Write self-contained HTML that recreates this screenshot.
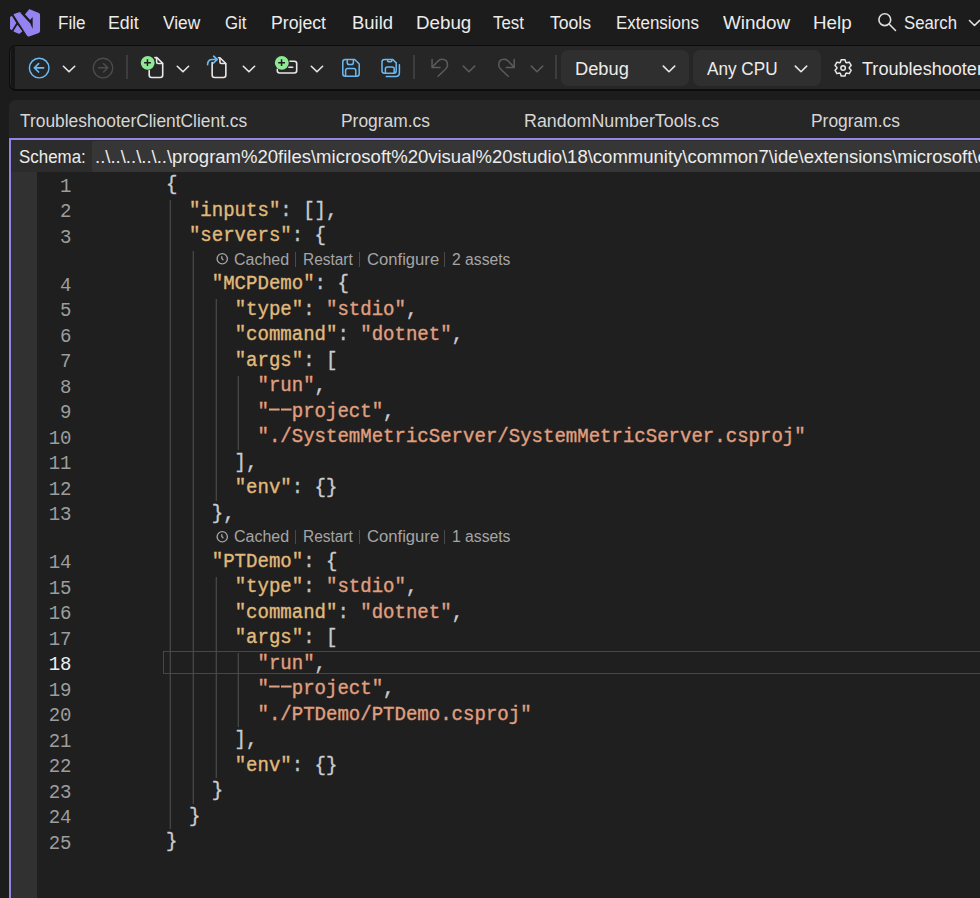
<!DOCTYPE html>
<html><head><meta charset="utf-8"><style>
*{margin:0;padding:0;box-sizing:border-box}
html,body{width:980px;height:898px;overflow:hidden;background:#1c1c1c;font-family:"Liberation Sans",sans-serif;color:#e6e6e6}
.abs{position:absolute}
.mi{position:absolute;top:11.5px;font-size:18.3px;transform:scaleX(0.951);transform-origin:0 0;line-height:22px;color:#ececec;white-space:nowrap}
#tb{position:absolute;left:9.2px;top:45.2px;width:990px;height:45.6px;background:#262626;border:1.8px solid #0c0c0c;border-bottom-width:2.7px;border-radius:7px}
#grip{position:absolute;left:11px;top:47px;width:4.2px;height:41px;background:#151515;border-radius:5px 0 0 5px}
.sepv{position:absolute;width:1.5px;top:55px;height:24px;background:#3d3d3d}
.dd{position:absolute;top:50px;height:35.5px;background:#2f2f2f;border-radius:7px}
.ddt{position:absolute;top:57.8px;font-size:18.3px;transform:scaleX(0.951);transform-origin:0 0;line-height:22px;color:#ececec;white-space:nowrap}
#tabs{position:absolute;left:9px;top:100px;width:990px;height:40px;background:#262626;border-radius:6.5px 0 0 0}
.tab{position:absolute;top:109.5px;font-size:18.3px;transform:scaleX(0.951);transform-origin:0 0;line-height:22px;color:#d6d6d6;white-space:nowrap}
#frame{position:absolute;left:9px;top:138px;width:990px;height:800px;border-left:2px solid #9484e6;border-top:2px solid #9484e6}
#schema{position:absolute;left:11px;top:140px;width:980px;height:32px;background:#2c2c2c}
#combo{position:absolute;left:92px;top:141px;width:900px;height:30.5px;background:#363636;border-radius:2px 0 0 2px}
.st{position:absolute;top:145.5px;font-size:18.3px;transform:scaleX(0.951);transform-origin:0 0;line-height:22px;color:#ececec;white-space:nowrap}
#gut{position:absolute;left:11px;top:172px;width:26px;height:726px;background:#313131}
#ed{position:absolute;left:37px;top:172px;width:943px;height:726px;background:#1f1f1f}
.ln{position:absolute;left:30px;width:41.5px;text-align:right;font-family:"Liberation Mono",monospace;font-size:19.05px;line-height:25.5px;color:#9d9d9d;padding-top:0.2px;transform:scaleY(1.1);transform-origin:0 18px}
.ln.cur{color:#efefef}
.cl{position:absolute;left:166.1px;font-family:"Liberation Mono",monospace;font-size:19.05px;line-height:25.5px;color:#c9ccd0;white-space:pre;margin-top:-1px;-webkit-text-stroke:0.35px currentColor;transform:scaleY(1.06);transform-origin:0 17px}
.cl b{font-weight:normal}
.dash{color:transparent;background:linear-gradient(#e0a080,#e0a080) 0.5px 8.2px/10.6px 1.9px no-repeat,linear-gradient(#e0a080,#e0a080) 12.1px 8.2px/10.6px 1.9px no-repeat}
.cl i{font-style:normal;color:#bcc3ca}
.g{position:absolute;width:1px;background:#454545;box-shadow:-1px 0 0 #2c2c2c}
#cur{position:absolute;left:163px;top:651px;width:830px;height:23px;border:1px solid #474747}
.lens{position:absolute;left:0;width:980px;height:22.5px}
.lens span{position:absolute;top:-2.5px;font-size:16px;line-height:22px;color:#a5a5a5;white-space:nowrap}
.lens span.sep{top:1px;width:1px;height:14.5px;background:#4a4a4a}
.clock{position:absolute;left:215px;top:1px}
</style></head><body>
<!-- logo -->
<svg class="abs" style="left:0;top:0" width="45" height="40" viewBox="0 0 45 40">
<g fill="#9483f0" stroke="#9483f0" stroke-width="1.3" stroke-linejoin="round">
<path d="M10.7 17.2 L11.6 16.7 L15.6 23 L11.6 29.3 L10.7 28.8 Z"/>
<path d="M14.2 31.2 L17.5 25.8 L21.6 31.3 L19.1 33.2 Z"/>
<path d="M14.3 14.6 L19.1 12.9 L21.5 13.4 L24.9 15.4 L29.5 9.8 L38.6 13.5 L39.4 14.6 V31.2 L38.6 32.4 L28.8 36 L27.6 35.4 Z"/>
</g>
<path d="M21.6 12.4 L30.4 22" stroke="#1c1c1c" stroke-width="2.3"/>
<path d="M29.2 21.1 L32.7 16.9 L32.7 29 Z" fill="#1c1c1c"/>
</svg>
<span class="mi" style="left:57.6px;transform:scaleX(0.9367)">File</span><span class="mi" style="left:107.6px;transform:scaleX(0.9700)">Edit</span><span class="mi" style="left:163.3px;transform:scaleX(0.9462)">View</span><span class="mi" style="left:225.3px;transform:scaleX(0.9177)">Git</span><span class="mi" style="left:271.3px;transform:scaleX(0.9672)">Project</span><span class="mi" style="left:351.9px;transform:scaleX(1.0081)">Build</span><span class="mi" style="left:415.6px;transform:scaleX(1.0252)">Debug</span><span class="mi" style="left:493.3px;transform:scaleX(0.9187)">Test</span><span class="mi" style="left:549.6px;transform:scaleX(0.9624)">Tools</span><span class="mi" style="left:615.6px;transform:scaleX(0.9272)">Extensions</span><span class="mi" style="left:723.3px;transform:scaleX(1.0309)">Window</span><span class="mi" style="left:813.3px;transform:scaleX(1.0271)">Help</span><span class="mi" style="left:904.3px;transform:scaleX(0.9149)">Search</span>

<!-- toolbar -->
<div id="tb"></div><div id="grip"></div>
<div class="sepv" style="left:126px"></div>
<div class="sepv" style="left:413px"></div>
<div class="sepv" style="left:555px"></div>
<div class="dd" style="left:561px;width:128px"></div>
<span class="ddt" style="left:575px;transform:scaleX(0.999)">Debug</span>
<div class="dd" style="left:693px;width:128px"></div>
<span class="ddt" style="left:706.5px;transform:scaleX(0.9386)">Any CPU</span>
<svg class="abs" style="left:0;top:0" width="980" height="100" viewBox="0 0 980 100" fill="none" stroke-linecap="round" stroke-linejoin="round">
<!-- back -->
<circle cx="39.2" cy="68.05" r="9.8" stroke="#6cb9f2" stroke-width="1.45"/>
<path d="M34.4 67.8H43.6M38.6 63.7L34.4 67.8L38.6 72" stroke="#6cb9f2" stroke-width="1.7"/>
<path d="M63.4 66.3L69.05 71.8L74.7 66.3" stroke="#e8e8e8" stroke-width="1.6"/>
<!-- forward (disabled) -->
<circle cx="103" cy="68.05" r="9.8" stroke="#4c4c4c" stroke-width="1.4"/>
<path d="M98.6 67.8H107.8M103.6 63.7L107.8 67.8L103.6 72" stroke="#4c4c4c" stroke-width="1.6"/>
<!-- new project -->
<path d="M154.9 57.6H156.9L162.7 63.4V75.1Q162.7 77.5 160.3 77.5H151.6Q149.2 77.5 149.2 75.1V70.6" stroke="#e8e8e8" stroke-width="1.6"/>
<path d="M156.6 58.6V62Q156.6 63.45 158 63.45H162.4" stroke="#e8e8e8" stroke-width="1.6"/>
<circle cx="147.7" cy="62.85" r="6.95" fill="#8fe894" stroke="none"/>
<path d="M147.45 59.3V66.1M144.1 62.65H150.9" stroke="#1e1e1e" stroke-width="1.5" stroke-linecap="butt"/>
<path d="M177.3 66.3L182.95 71.8L188.6 66.3" stroke="#e8e8e8" stroke-width="1.6"/>
<!-- open -->
<path d="M218.6 57.7H219.9L225.85 63.5V75.1Q225.85 77.5 223.45 77.5H214.55Q212.15 77.5 212.15 75.1V62.6" stroke="#e8e8e8" stroke-width="1.6"/>
<path d="M219.95 58.6V62Q219.95 63.45 221.4 63.45H225.5" stroke="#e8e8e8" stroke-width="1.6"/>
<path d="M207.6 64.6Q207.6 59.5 212.5 59.5H217.2M213.6 56.2L217.2 59.5L213.6 62.9" stroke="#6cb9f2" stroke-width="1.7"/>
<path d="M243.3 66.3L248.95 71.8L254.6 66.3" stroke="#e8e8e8" stroke-width="1.6"/>
<!-- add item -->
<path d="M290 61.2H294.3Q296.7 61.2 296.7 63.6V70.6Q296.7 73 294.3 73H279.7Q277.3 73 277.3 70.6V69.4" stroke="#e8e8e8" stroke-width="1.6"/>
<path d="M288.9 67.3H292.7" stroke="#e8e8e8" stroke-width="1.6"/>
<circle cx="281.8" cy="62.85" r="6.95" fill="#8fe894" stroke="none"/>
<path d="M281.55 59.3V66.1M278.2 62.65H285" stroke="#1e1e1e" stroke-width="1.5" stroke-linecap="butt"/>
<path d="M311.3 66.3L316.95 71.8L322.6 66.3" stroke="#e8e8e8" stroke-width="1.6"/>
<!-- save -->
<path d="M345.3 59.5H354.7L359.2 64V73.8Q359.2 76.3 356.7 76.3H345.3Q342.8 76.3 342.8 73.8V62Q342.8 59.5 345.3 59.5Z" stroke="#6cb9f2" stroke-width="1.5"/>
<path d="M347.2 59.8V62.4Q347.2 64.5 349.3 64.5H351.3Q353.4 64.5 353.4 62.4V59.8" stroke="#6cb9f2" stroke-width="1.5"/>
<path d="M345.6 76V70.6Q345.6 68.4 347.8 68.4H353.6Q355.8 68.4 355.8 70.6V76" stroke="#6cb9f2" stroke-width="1.5"/>
<!-- save all -->
<path d="M384.5 59.5H392.8L396.2 62.9V70.8Q396.2 73.3 393.7 73.3H384.5Q382 73.3 382 70.8V62Q382 59.5 384.5 59.5Z" stroke="#6cb9f2" stroke-width="1.5"/>
<path d="M387.5 59.8V60.6Q387.5 61.8 388.7 61.8H390.7Q391.9 61.8 391.9 60.6V59.8" stroke="#6cb9f2" stroke-width="1.5"/>
<path d="M385.4 73V69Q385.4 67 387.4 67H392.2Q394.2 67 394.2 69V73" stroke="#6cb9f2" stroke-width="1.5"/>
<path d="M399.4 64.8V72.8Q399.4 76.6 395.6 76.6H386.3" stroke="#6cb9f2" stroke-width="1.5"/>
<!-- undo -->
<path d="M432.06 59.4V67.4H440" stroke="#5c5c5c" stroke-width="1.5"/>
<path d="M432.6 66.8L437.6 61.4Q439.6 59.3 442 59.3Q447.5 59.3 447.5 65Q447.5 67.2 445.9 68.7L438.1 76.2" stroke="#5c5c5c" stroke-width="1.5"/>
<path d="M463.3 66.1L469 71.7L474.7 66.1" stroke="#5c5c5c" stroke-width="1.5"/>
<!-- redo -->
<path d="M514.19 59.4V67.4H506.25" stroke="#5c5c5c" stroke-width="1.5"/>
<path d="M513.65 66.8L508.65 61.4Q506.65 59.3 504.25 59.3Q498.75 59.3 498.75 65Q498.75 67.2 500.35 68.7L508.15 76.2" stroke="#5c5c5c" stroke-width="1.5"/>
<path d="M531.3 66.1L537 71.7L542.7 66.1" stroke="#5c5c5c" stroke-width="1.5"/>
<!-- dropdown chevrons -->
<path d="M663.3 66.1L669 71.7L674.7 66.1" stroke="#e8e8e8" stroke-width="1.6"/>
<path d="M795.3 66.1L801 71.7L806.7 66.1" stroke="#e8e8e8" stroke-width="1.6"/>
<!-- gear -->
<path d="M840.38 62.33 L841.21 59.72 L844.99 59.72 L845.82 62.33 L846.57 62.76 L849.24 62.17 L851.13 65.44 L849.28 67.47 L849.28 68.33 L851.13 70.36 L849.24 73.63 L846.57 73.04 L845.82 73.47 L844.99 76.08 L841.21 76.08 L840.38 73.47 L839.63 73.04 L836.96 73.63 L835.07 70.36 L836.92 68.33 L836.92 67.47 L835.07 65.44 L836.96 62.17 L839.63 62.76 Z" stroke="#e8e8e8" stroke-width="1.5"/>
<circle cx="843.1" cy="67.9" r="2.25" stroke="#e8e8e8" stroke-width="1.5"/>
<!-- search -->
<circle cx="884.8" cy="19.7" r="5.9" stroke="#dedede" stroke-width="1.6"/>
<path d="M889.3 24.3L895.5 30.5" stroke="#dedede" stroke-width="1.6"/>
<path d="M969.5 20.5L974.5 25.5L979.5 20.5" stroke="#dedede" stroke-width="1.6"/>
</svg>
<span class="ddt" style="left:861.5px;transform:scaleX(0.989)">Troubleshooter</span>
<!-- tabs -->
<div id="tabs"></div>
<span class="tab" style="left:19.7px;transform:scaleX(0.9500)">TroubleshooterClientClient.cs</span><span class="tab" style="left:340.5px;transform:scaleX(0.9510)">Program.cs</span><span class="tab" style="left:523.5px;transform:scaleX(0.9757)">RandomNumberTools.cs</span><span class="tab" style="left:811.0px;transform:scaleX(0.9510)">Program.cs</span>
<div id="schema"></div>
<div id="combo"></div>
<span class="st" style="left:18.5px;transform:scaleX(0.925)">Schema:</span>
<span class="st" id="path" style="left:94.5px;transform:scaleX(1.0123);transform-origin:0 0">..\..\..\..\..\program%20files\microsoft%20visual%20studio\18\community\common7\ide\extensions\microsoft\c</span>
<div id="frame"></div>
<div id="gut"></div>
<div id="ed"></div>
<div class="g" style="left:170px;top:200.0px;height:629.0px"></div>
<div class="g" style="left:193px;top:251.0px;height:552.5px"></div>
<div class="g" style="left:216px;top:299.0px;height:201.5px"></div>
<div class="g" style="left:216px;top:576.5px;height:201.5px"></div>
<div class="g" style="left:238px;top:375.5px;height:74.0px"></div>
<div class="g" style="left:238px;top:653.0px;height:74.0px"></div>
<div id="cur"></div>
<div class="lens" style="top:251.0px">
<svg class="clock" width="14" height="14" viewBox="0 0 14 14"><circle cx="7.25" cy="6.75" r="5.15" fill="none" stroke="#a5a5a5" stroke-width="1.35"/><path d="M6.8 4.6V6.5L8 7.7" fill="none" stroke="#a5a5a5" stroke-width="1.3" stroke-linecap="round"/></svg>
<span style="left:234px">Cached</span><span class="sep" style="left:294.6px"></span><span style="left:302.5px;transform:scaleX(0.965);transform-origin:0 0">Restart</span><span class="sep" style="left:358.5px"></span><span style="left:366.5px;transform:scaleX(1.04);transform-origin:0 0">Configure</span><span class="sep" style="left:444.3px"></span><span style="left:452.3px;transform:scaleX(0.98);transform-origin:0 0">2 assets</span></div>
<div class="lens" style="top:528.5px">
<svg class="clock" width="14" height="14" viewBox="0 0 14 14"><circle cx="7.25" cy="6.75" r="5.15" fill="none" stroke="#a5a5a5" stroke-width="1.35"/><path d="M6.8 4.6V6.5L8 7.7" fill="none" stroke="#a5a5a5" stroke-width="1.3" stroke-linecap="round"/></svg>
<span style="left:234px">Cached</span><span class="sep" style="left:294.6px"></span><span style="left:302.5px;transform:scaleX(0.965);transform-origin:0 0">Restart</span><span class="sep" style="left:358.5px"></span><span style="left:366.5px;transform:scaleX(1.04);transform-origin:0 0">Configure</span><span class="sep" style="left:444.3px"></span><span style="left:452.3px;transform:scaleX(0.98);transform-origin:0 0">1 assets</span></div>
<div class="ln" style="top:174.5px">1</div>
<div class="cl" style="top:174px">{</div>
<div class="ln" style="top:200.0px">2</div>
<div class="cl" style="top:200px">  <b style="color:#e0ba7b">&quot;inputs&quot;</b><i>:</i> [],</div>
<div class="ln" style="top:225.5px">3</div>
<div class="cl" style="top:225px">  <b style="color:#e0ba7b">&quot;servers&quot;</b><i>:</i> {</div>
<div class="ln" style="top:273.5px">4</div>
<div class="cl" style="top:273px">    <b style="color:#e0ba7b">&quot;MCPDemo&quot;</b><i>:</i> {</div>
<div class="ln" style="top:299.0px">5</div>
<div class="cl" style="top:299px">      <b style="color:#e0ba7b">&quot;type&quot;</b><i>:</i> <b style="color:#e0a080">&quot;stdio&quot;</b>,</div>
<div class="ln" style="top:324.5px">6</div>
<div class="cl" style="top:324px">      <b style="color:#e0ba7b">&quot;command&quot;</b><i>:</i> <b style="color:#e0a080">&quot;dotnet&quot;</b>,</div>
<div class="ln" style="top:350.0px">7</div>
<div class="cl" style="top:350px">      <b style="color:#e0ba7b">&quot;args&quot;</b><i>:</i> [</div>
<div class="ln" style="top:375.5px">8</div>
<div class="cl" style="top:375px">        <b style="color:#e0a080">&quot;run&quot;</b>,</div>
<div class="ln" style="top:401.0px">9</div>
<div class="cl" style="top:401px">        <b style="color:#e0a080">&quot;<span class="dash">--</span>project&quot;</b>,</div>
<div class="ln" style="top:426.5px">10</div>
<div class="cl" style="top:426px">        <b style="color:#e0a080">&quot;./SystemMetricServer/SystemMetricServer.csproj&quot;</b></div>
<div class="ln" style="top:452.0px">11</div>
<div class="cl" style="top:452px">      ],</div>
<div class="ln" style="top:477.5px">12</div>
<div class="cl" style="top:477px">      <b style="color:#e0ba7b">&quot;env&quot;</b><i>:</i> {}</div>
<div class="ln" style="top:503.0px">13</div>
<div class="cl" style="top:503px">    },</div>
<div class="ln" style="top:551.0px">14</div>
<div class="cl" style="top:551px">    <b style="color:#e0ba7b">&quot;PTDemo&quot;</b><i>:</i> {</div>
<div class="ln" style="top:576.5px">15</div>
<div class="cl" style="top:576px">      <b style="color:#e0ba7b">&quot;type&quot;</b><i>:</i> <b style="color:#e0a080">&quot;stdio&quot;</b>,</div>
<div class="ln" style="top:602.0px">16</div>
<div class="cl" style="top:602px">      <b style="color:#e0ba7b">&quot;command&quot;</b><i>:</i> <b style="color:#e0a080">&quot;dotnet&quot;</b>,</div>
<div class="ln" style="top:627.5px">17</div>
<div class="cl" style="top:627px">      <b style="color:#e0ba7b">&quot;args&quot;</b><i>:</i> [</div>
<div class="ln cur" style="top:653.0px">18</div>
<div class="cl" style="top:653px">        <b style="color:#e0a080">&quot;run&quot;</b>,</div>
<div class="ln" style="top:678.5px">19</div>
<div class="cl" style="top:678px">        <b style="color:#e0a080">&quot;<span class="dash">--</span>project&quot;</b>,</div>
<div class="ln" style="top:704.0px">20</div>
<div class="cl" style="top:704px">        <b style="color:#e0a080">&quot;./PTDemo/PTDemo.csproj&quot;</b></div>
<div class="ln" style="top:729.5px">21</div>
<div class="cl" style="top:729px">      ],</div>
<div class="ln" style="top:755.0px">22</div>
<div class="cl" style="top:755px">      <b style="color:#e0ba7b">&quot;env&quot;</b><i>:</i> {}</div>
<div class="ln" style="top:780.5px">23</div>
<div class="cl" style="top:780px">    }</div>
<div class="ln" style="top:806.0px">24</div>
<div class="cl" style="top:806px">  }</div>
<div class="ln" style="top:831.5px">25</div>
<div class="cl" style="top:831px">}</div>
</body></html>
